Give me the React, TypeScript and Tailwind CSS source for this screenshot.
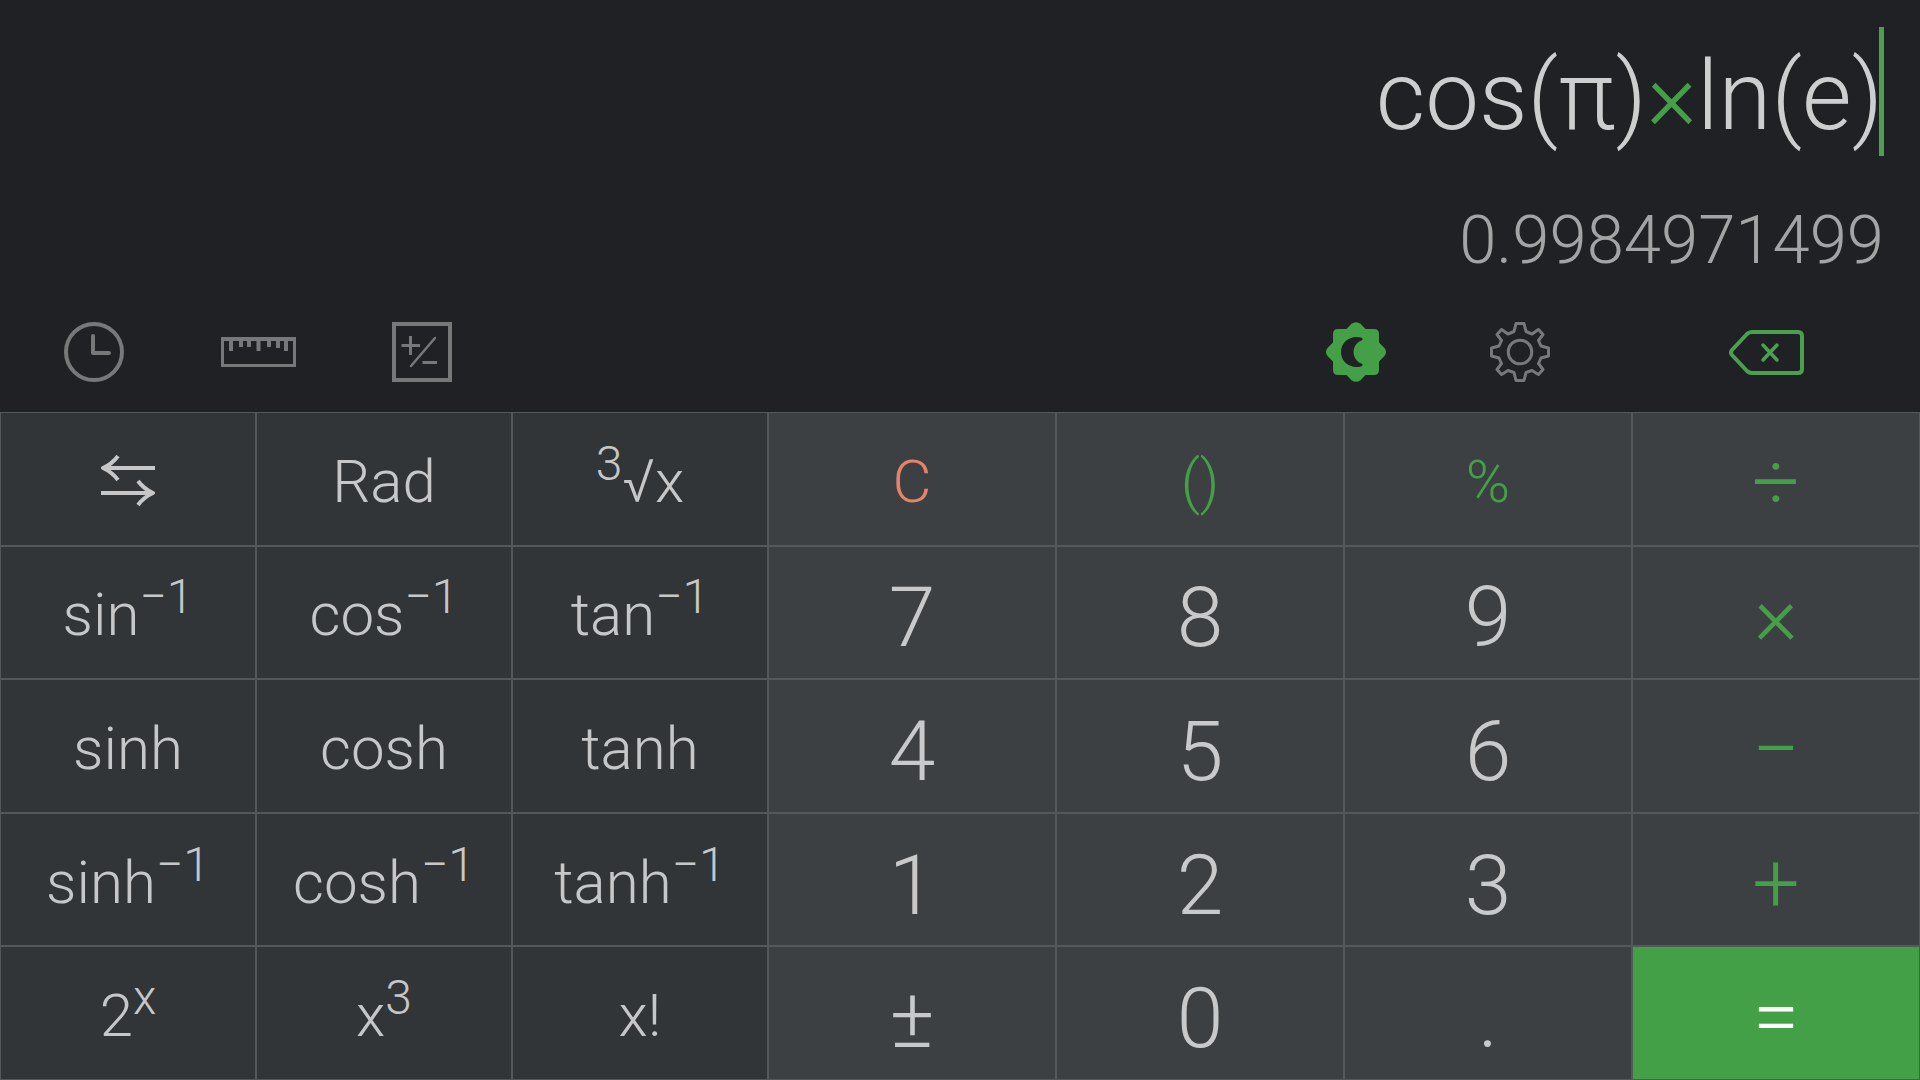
import { useState } from "react";
import type { ReactNode } from "react";

type Key = {
  id: string;
  label: ReactNode;
  className: string;
};

const FN = "bg-[#323538] text-[#c6c7c8] text-6xl pt-1.5";
const DIGIT = "bg-[#3d4043] text-[#c8c9ca] text-[84px] pt-3";
const ACTION = "bg-[#3d4043] text-[#43a047] text-6xl pt-1.5";
const OPERATOR = "bg-[#3d4043] text-[#43a047] text-[84px] pt-2";

function Sup({ children }: { children: ReactNode }) {
  return <sup className="-top-[22px] text-5xl leading-0">{children}</sup>;
}

function SwapIcon() {
  return (
    <svg viewBox="0 0 54 52" className="h-[52px] w-[54px]" fill="none" stroke="currentColor" strokeWidth="4" strokeLinejoin="round">
      <path d="M54 13H2M17 1Q11 9 2 13Q11 17 17 25" />
      <path d="M0 38H52M37 26Q43 34 52 38Q43 42 37 50" />
    </svg>
  );
}

function ClockIcon() {
  return (
    <svg viewBox="0 0 60 60" className="size-[60px]" fill="none" stroke="currentColor" strokeWidth="4">
      <circle cx="30" cy="30" r="28" />
      <path d="M29 14V31H45" strokeLinecap="round" strokeLinejoin="round" />
    </svg>
  );
}

function RulerIcon() {
  return (
    <svg viewBox="0 0 75 30" className="h-[30px] w-[75px]" fill="none" stroke="currentColor" strokeWidth="3">
      <rect x="1.5" y="1.5" width="72" height="27" />
      <path d="M2 3H73" strokeWidth="2" />
      <path d="M10 2V14M20 2V10M28 2V10M37.5 2V14M48 2V10M57 2V11M65 2V14" strokeWidth="4" />
    </svg>
  );
}

function PlusMinusIcon() {
  return (
    <svg viewBox="0 0 60 60" className="size-[60px]" fill="none" stroke="currentColor" strokeWidth="3">
      <rect x="2" y="2" width="56" height="56" strokeWidth="4" />
      <path d="M18.5 14V33M9.5 23.5H28M30.5 40.5H45" />
      <path d="M43 16L19 44" strokeWidth="2.5" strokeLinecap="round" />
    </svg>
  );
}

function NightIcon() {
  return (
    <svg viewBox="0 0 60 60" className="size-[60px]">
      <path
        fill="currentColor"
        d="M25.5 1.8Q30 -1.5 34.5 1.8L39.5 7H48Q53 7 53 12V20.5L58.5 26Q61.5 30 58.5 34L53 39.5V48Q53 53 48 53H39.5L34.5 58.2Q30 61.5 25.5 58.2L20.5 53H12Q7 53 7 48V39.5L1.5 34Q-1.5 30 1.5 26L7 20.5V12Q7 7 12 7H20.5Z"
      />
      <path fill="#202124" d="M35 15.5Q38 17 35.5 18.5C25 22.5 25 37.5 35.5 41.5Q38 43 35 44.5C24 47 15 40 15 30C15 20 24 13 35 15.5Z" />
    </svg>
  );
}

function GearIcon() {
  return (
    <svg viewBox="0 0 60 60" className="size-[60px]" fill="none" stroke="currentColor" strokeWidth="3" strokeLinejoin="round">
      <circle cx="30" cy="30" r="11.8" />
      <path d="M26 1.5H34L36 9.5L42 12L48.5 7.5L53 12.5L48.5 18.5L51 24L58.5 26V34L51 36L48.5 41.5L53 47.5L48.5 52.5L42 48.5L36 50.5L34 58.5H26L24 50.5L18 48.5L11.5 52.5L7 47.5L11.5 41.5L9 36L1.5 34V26L9 24L11.5 18.5L7 12.5L11.5 7.5L18 12L24 9.5Z" />
    </svg>
  );
}

function BackspaceIcon() {
  return (
    <svg viewBox="0 0 75 45" className="h-[45px] w-[75px]" fill="none" stroke="currentColor" strokeLinejoin="round">
      <path d="M23 2H69Q73 2 73 6V39Q73 43 69 43H23Q20 43 18 41L3 25Q1 22.5 3 20L18 4Q20 2 23 2Z" strokeWidth="4" />
      <path d="M34 15L48 30M48 15L34 30" strokeWidth="3.5" strokeLinecap="round" />
    </svg>
  );
}

const functionKeys: Key[] = [
  { id: "swap", label: <SwapIcon />, className: "bg-[#323538] text-[#c6c7c8] pt-1" },
  { id: "rad", label: "Rad", className: FN },
  { id: "cube root", label: <><Sup>3</Sup>√x</>, className: FN },
  { id: "asin", label: <>sin<Sup>−1</Sup></>, className: FN },
  { id: "acos", label: <>cos<Sup>−1</Sup></>, className: FN },
  { id: "atan", label: <>tan<Sup>−1</Sup></>, className: FN },
  { id: "sinh", label: "sinh", className: FN },
  { id: "cosh", label: "cosh", className: FN },
  { id: "tanh", label: "tanh", className: FN },
  { id: "asinh", label: <>sinh<Sup>−1</Sup></>, className: FN },
  { id: "acosh", label: <>cosh<Sup>−1</Sup></>, className: FN },
  { id: "atanh", label: <>tanh<Sup>−1</Sup></>, className: FN },
  { id: "power of two", label: <>2<Sup>x</Sup></>, className: FN },
  { id: "cube", label: <>x<Sup>3</Sup></>, className: FN },
  { id: "factorial", label: "x!", className: FN },
];

const mainKeys: Key[] = [
  { id: "clear", label: "C", className: "bg-[#3d4043] text-[#e5836a] text-6xl pt-1.5" },
  { id: "parentheses", label: "()", className: ACTION },
  { id: "percent", label: "%", className: ACTION },
  { id: "divide", label: "÷", className: OPERATOR },
  { id: "7", label: "7", className: DIGIT },
  { id: "8", label: "8", className: DIGIT },
  { id: "9", label: "9", className: DIGIT },
  { id: "multiply", label: "×", className: OPERATOR },
  { id: "4", label: "4", className: DIGIT },
  { id: "5", label: "5", className: DIGIT },
  { id: "6", label: "6", className: DIGIT },
  { id: "minus", label: "−", className: OPERATOR },
  { id: "1", label: "1", className: DIGIT },
  { id: "2", label: "2", className: DIGIT },
  { id: "3", label: "3", className: DIGIT },
  { id: "plus", label: "+", className: OPERATOR },
  { id: "sign", label: "±", className: DIGIT },
  { id: "0", label: "0", className: DIGIT },
  { id: "point", label: ".", className: DIGIT },
  { id: "equals", label: "=", className: "bg-[#43a047] text-white text-[84px] pt-2" },
];

function KeyButton({ item }: { item: Key }) {
  return (
    <button
      type="button"
      aria-label={item.id}
      className={`flex items-center justify-center border border-[#54585a] leading-none ${item.className}`}
    >
      <span>{item.label}</span>
    </button>
  );
}

export default function App() {
  const [night, setNight] = useState(true);
  const tool = "flex h-full w-[164px] items-center justify-center text-[#77787a]";

  return (
    <main className="flex min-h-screen flex-col bg-[#202124] font-['Roboto',sans-serif] font-light">
      {/* Display */}
      <section className="flex flex-col items-end px-9 pt-[27px]">
        <div role="textbox" aria-label="Expression" className="flex h-[129px] text-8xl leading-none text-[#cdcecf]">
          <p className="self-center pt-2">
            cos(π)<span className="text-[#43a047]">×</span>ln(e)
          </p>
          {/* the caret touches the last bracket */}
          <span className="-ml-1 w-[5px] bg-[#4c9f50]" />
        </div>
        <output className="mt-11 block text-[67px] leading-20 text-[#a3a4a6]">0.9984971499</output>
      </section>

      {/* Toolbar */}
      <nav className="mt-3 flex h-[120px] items-center justify-between pr-[72px] pl-3">
        <div className="flex h-full">
          <button type="button" aria-label="History" className={tool}><ClockIcon /></button>
          <button type="button" aria-label="Unit converter" className={tool}><RulerIcon /></button>
          <button type="button" aria-label="Basic keypad" className={tool}><PlusMinusIcon /></button>
        </div>
        <div className="flex h-full">
          <button
            type="button"
            aria-label="Night mode"
            aria-pressed={night}
            onClick={() => setNight(!night)}
            className="flex h-full w-[164px] items-center justify-center text-[#43a047]"
          >
            <NightIcon />
          </button>
          <button type="button" aria-label="Settings" className={tool}><GearIcon /></button>
          <button type="button" aria-label="Backspace" className="ml-[82px] flex h-full w-[164px] items-center justify-center text-[#4ba050]">
            <BackspaceIcon />
          </button>
        </div>
      </nav>

      {/* Keypad */}
      <section className="flex flex-1">
        <div className="grid w-2/5 grid-cols-3 grid-rows-5">
          {functionKeys.map((item) => (
            <KeyButton key={item.id} item={item} />
          ))}
        </div>
        <div className="grid w-3/5 grid-cols-4 grid-rows-5">
          {mainKeys.map((item) => (
            <KeyButton key={item.id} item={item} />
          ))}
        </div>
      </section>
    </main>
  );
}
